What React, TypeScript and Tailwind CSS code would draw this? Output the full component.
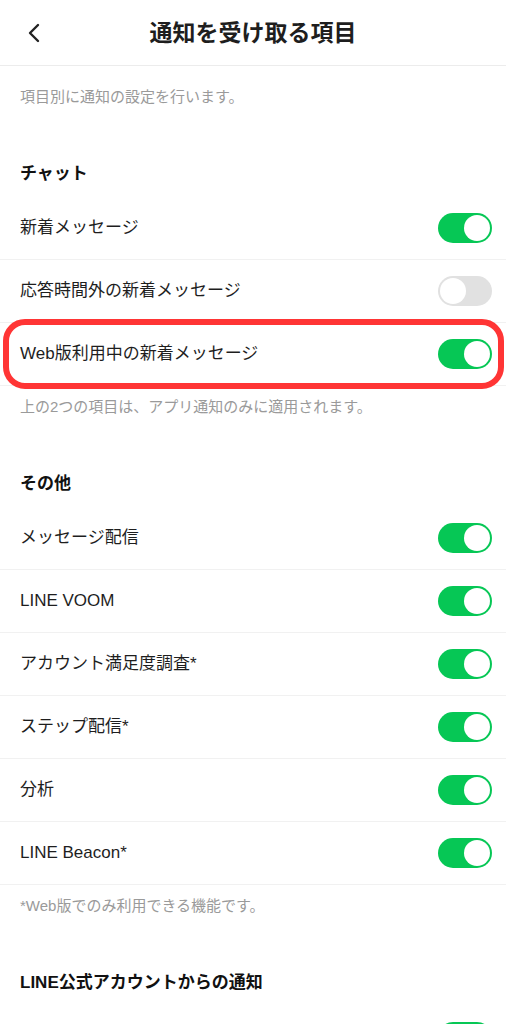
import React from "react";

type Item = { label: string; on: boolean; marked?: boolean };

const SECTIONS: { title: string; items: Item[]; note?: string }[] = [
  {
    title: "チャット",
    items: [
      { label: "新着メッセージ", on: true },
      { label: "応答時間外の新着メッセージ", on: false },
      { label: "Web版利用中の新着メッセージ", on: true, marked: true },
    ],
    note: "上の2つの項目は、アプリ通知のみに適用されます。",
  },
  {
    title: "その他",
    items: [
      { label: "メッセージ配信", on: true },
      { label: "LINE VOOM", on: true },
      { label: "アカウント満足度調査*", on: true },
      { label: "ステップ配信*", on: true },
      { label: "分析", on: true },
      { label: "LINE Beacon*", on: true },
    ],
    note: "*Web版でのみ利用できる機能です。",
  },
  {
    title: "LINE公式アカウントからの通知",
    items: [{ label: "", on: true }],
  },
];

function Toggle({ on }: { on: boolean }) {
  return (
    <div
      className={`flex h-[30px] w-[54px] shrink-0 items-center rounded-full p-[2px] ${
        on ? "justify-end bg-[#06c755]" : "justify-start bg-[#e1e1e1]"
      }`}
    >
      <div className="h-[26px] w-[26px] rounded-full bg-white" />
    </div>
  );
}

function Row({ item }: { item: Item }) {
  return (
    <div className="relative">
      <div className="flex h-[63px] items-center justify-between border-b border-[#f1f1f1] pl-5 pr-[14px]">
        <span className="text-[17px] leading-6 text-[#1e1e1e]">{item.label}</span>
        <Toggle on={item.on} />
      </div>
      {item.marked && (
        <div className="pointer-events-none absolute -top-[4px] left-[3px] right-[2px] h-[70px] rounded-[22px] border-[6px] border-[#ff3535]" />
      )}
    </div>
  );
}

export default function App() {
  return (
    <div
      className="h-[1024px] w-full overflow-hidden bg-white"
      style={{ fontFamily: '"Liberation Sans", "Noto Sans CJK JP", sans-serif' }}
    >
      <header className="relative flex h-[66px] items-center justify-center border-b border-[#ececec]">
        <svg
          className="absolute left-[26px] top-[23px]"
          width="16"
          height="20"
          viewBox="0 0 16 20"
          fill="none"
          stroke="#222"
          strokeWidth="2.4"
          strokeLinecap="round"
          strokeLinejoin="round"
        >
          <path d="M12 2 L4 10 L12 18" />
        </svg>
        <h1 className="text-[23px] font-bold leading-8 text-[#1e1e1e]">通知を受け取る項目</h1>
      </header>

      <p className="px-5 pt-[21px] text-[15px] leading-5 text-[#9a9a9a]">項目別に通知の設定を行います。</p>

      {SECTIONS.map((s) => (
        <section key={s.title}>
          <h2 className="px-5 pb-[11px] pt-[55px] text-[17px] font-bold leading-6 text-[#111]">{s.title}</h2>
          {s.items.map((it, i) => (
            <Row key={i} item={it} />
          ))}
          {s.note && (
            <p className="px-5 pt-[11px] text-[15px] leading-5 text-[#9a9a9a]">{s.note}</p>
          )}
        </section>
      ))}
    </div>
  );
}
